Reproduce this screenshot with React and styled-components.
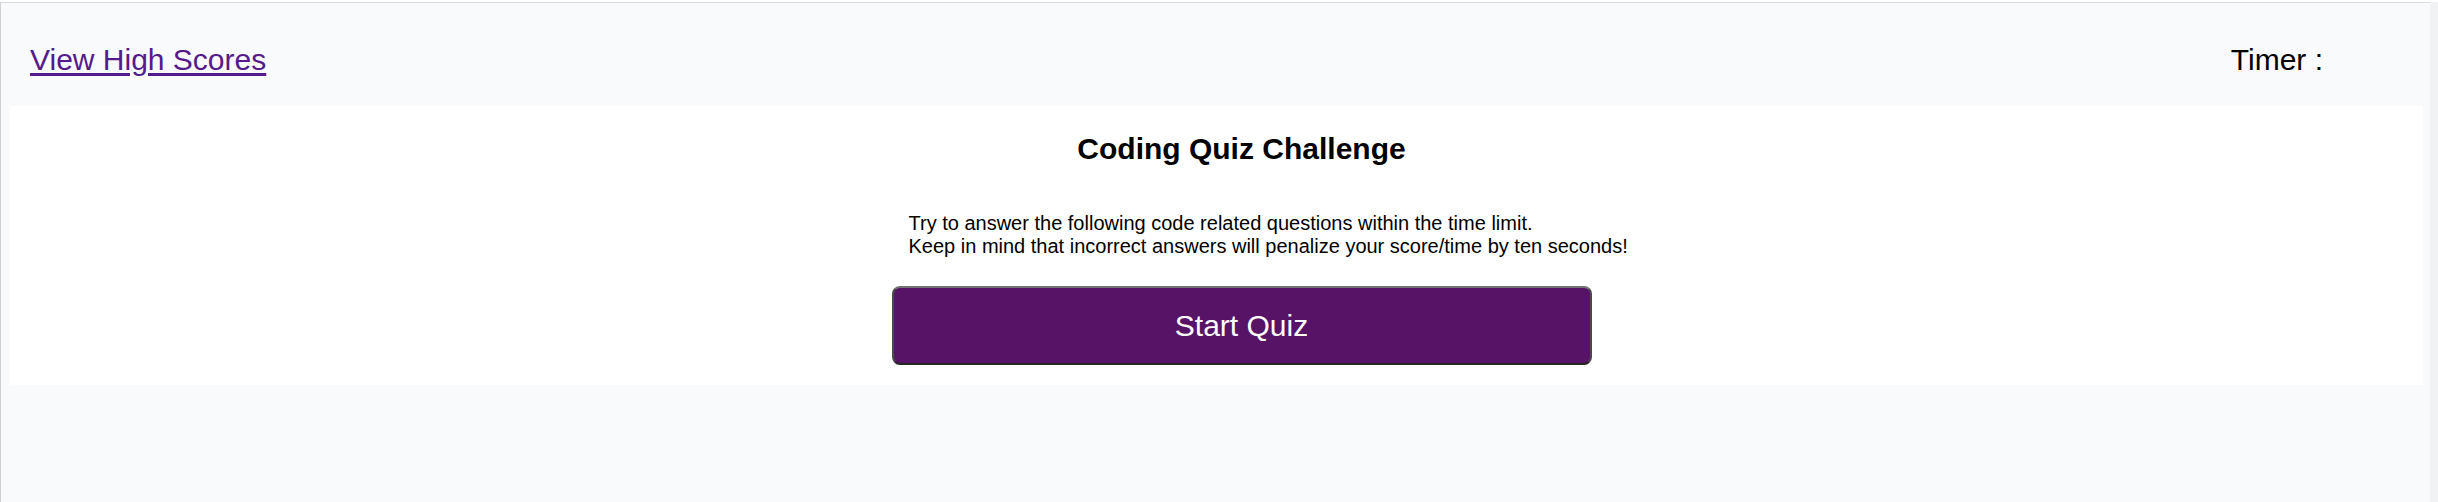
import React from "react"
import styled, { createGlobalStyle } from "styled-components"

const GlobalStyle = createGlobalStyle`
  html,
  body {
    margin: 0;
    padding: 0;
    background: #ffffff;
    font-family: "Liberation Sans", Arial, Helvetica, sans-serif;
  }
`

const Page = styled.div`
  display: flex;
  min-height: 100vh;
  padding-top: 2px;
  box-sizing: border-box;
`

const Panel = styled.main`
  flex: 1;
  display: flex;
  flex-direction: column;
  background: #f9fafc;
  border-top: 1px solid #dadbdd;
  border-left: 1px solid #cfd0d2;
`

const Gutter = styled.div`
  width: 8px;
  background: #f1f2f4;
`

const Header = styled.header`
  display: flex;
  justify-content: space-between;
  align-items: center;
  padding: 40px 107px 29px 29px;
  font-size: 30px;
  line-height: 34px;
`

const HighScores = styled.a`
  color: #551a8b;
  text-decoration: underline;
  text-underline-offset: 3px;
  cursor: pointer;
`

const Timer = styled.div`
  color: #000;
`

const Card = styled.section`
  display: flex;
  justify-content: center;
  margin: 0 7px 0 9px;
  padding: 26px 0 20px 50px;
  background: #ffffff;
`

const Column = styled.div`
  display: flex;
  flex-direction: column;
  width: 700px;
`

const Title = styled.h1`
  margin: 0;
  font-size: 30px;
  line-height: 34px;
  font-weight: bold;
  text-align: center;
  color: #000;
`

const Intro = styled.p`
  margin: 46px 0 28px 17px;
  font-size: 20px;
  line-height: 23px;
  color: #000;
  white-space: nowrap;
`

const StartButton = styled.button`
  height: 79px;
  width: 100%;
  border: 2px solid;
  border-color: #727272 #4a4a4a #262626 #4a4a4a;
  border-radius: 8px;
  background: #571467;
  color: #ffffff;
  font-family: inherit;
  font-size: 30px;
  cursor: pointer;
`

export default function App() {
  return (
    <>
      <GlobalStyle />
      <Page>
        <Panel>
          <Header>
            <HighScores>View High Scores</HighScores>
            <Timer>Timer :</Timer>
          </Header>
          <Card>
            <Column>
              <Title>Coding Quiz Challenge</Title>
              <Intro>
                Try to answer the following code related questions within the time limit.
                <br />
                Keep in mind that incorrect answers will penalize your score/time by ten seconds!
              </Intro>
              <StartButton>Start Quiz</StartButton>
            </Column>
          </Card>
        </Panel>
        <Gutter />
      </Page>
    </>
  )
}
